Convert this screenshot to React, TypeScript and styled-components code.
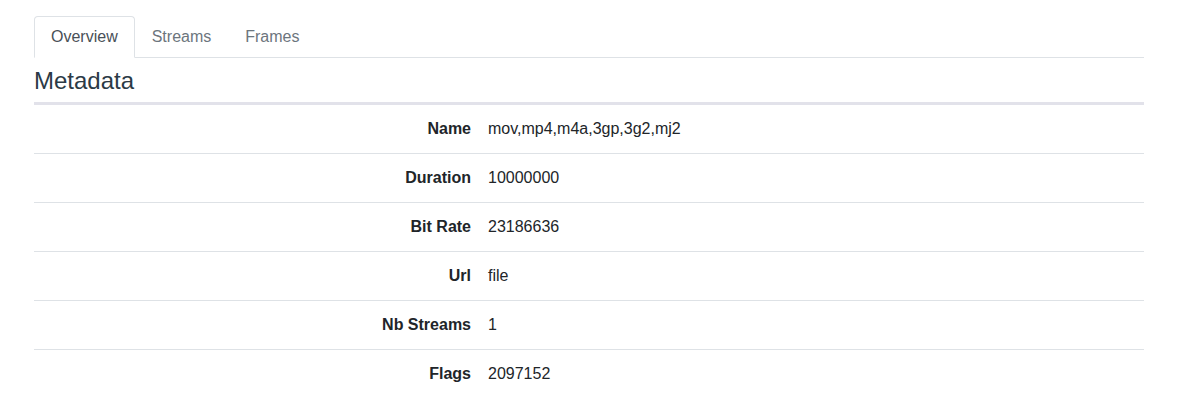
import React from "react";
import styled, { createGlobalStyle } from "styled-components";

const Global = createGlobalStyle`
  html, body { margin: 0; padding: 0; background: #fff; }
  body { font-family: "Liberation Sans", Arial, sans-serif; color: #212529; }
  * { box-sizing: border-box; }
`;

const Page = styled.div`
  padding: 16px 0 0 34px;
  width: 1144px;
`;

const Tabs = styled.ul`
  display: flex;
  list-style: none;
  margin: 0;
  padding: 0;
  border-bottom: 1px solid #dee2e6;
`;

const Tab = styled.li<{ $active?: boolean }>`
  margin-bottom: -1px;
  padding: 8px 16px;
  font-size: 16px;
  line-height: 24px;
  color: ${(p) => (p.$active ? "#495057" : "#6c757d")};
  background: ${(p) => (p.$active ? "#fff" : "transparent")};
  border: 1px solid transparent;
  border-color: ${(p) => (p.$active ? "#dee2e6 #dee2e6 #fff" : "transparent")};
  border-top-left-radius: 4px;
  border-top-right-radius: 4px;
`;

const Heading = styled.h2`
  margin: 8px 0 0;
  font-size: 24px;
  line-height: 29px;
  font-weight: 400;
  color: #2b3a46;
  padding-bottom: 7px;
  border-bottom: 3px solid #e2e2ea;
`;

const Table = styled.div`
  display: flex;
  flex-direction: column;
`;

const Row = styled.div<{ $last?: boolean }>`
  display: grid;
  grid-template-columns: 437px 1fr;
  border-bottom: 1px solid ${(p) => (p.$last ? "transparent" : "#dee2e6")};
  font-size: 16px;
  line-height: 24px;
`;

const Label = styled.div`
  padding: 12px 0;
  text-align: right;
  font-weight: 700;
  color: #212529;
`;

const Value = styled.div`
  padding: 12px 17px;
  color: #212529;
`;

const rows: [string, string][] = [
  ["Name", "mov,mp4,m4a,3gp,3g2,mj2"],
  ["Duration", "10000000"],
  ["Bit Rate", "23186636"],
  ["Url", "file"],
  ["Nb Streams", "1"],
  ["Flags", "2097152"],
];

export default function App() {
  return (
    <>
      <Global />
      <Page>
        <Tabs>
          <Tab $active>Overview</Tab>
          <Tab>Streams</Tab>
          <Tab>Frames</Tab>
        </Tabs>
        <Heading>Metadata</Heading>
        <Table>
          {rows.map(([k, v], i) => (
            <Row key={k} $last={i === rows.length - 1}>
              <Label>{k}</Label>
              <Value>{v}</Value>
            </Row>
          ))}
        </Table>
      </Page>
    </>
  );
}
